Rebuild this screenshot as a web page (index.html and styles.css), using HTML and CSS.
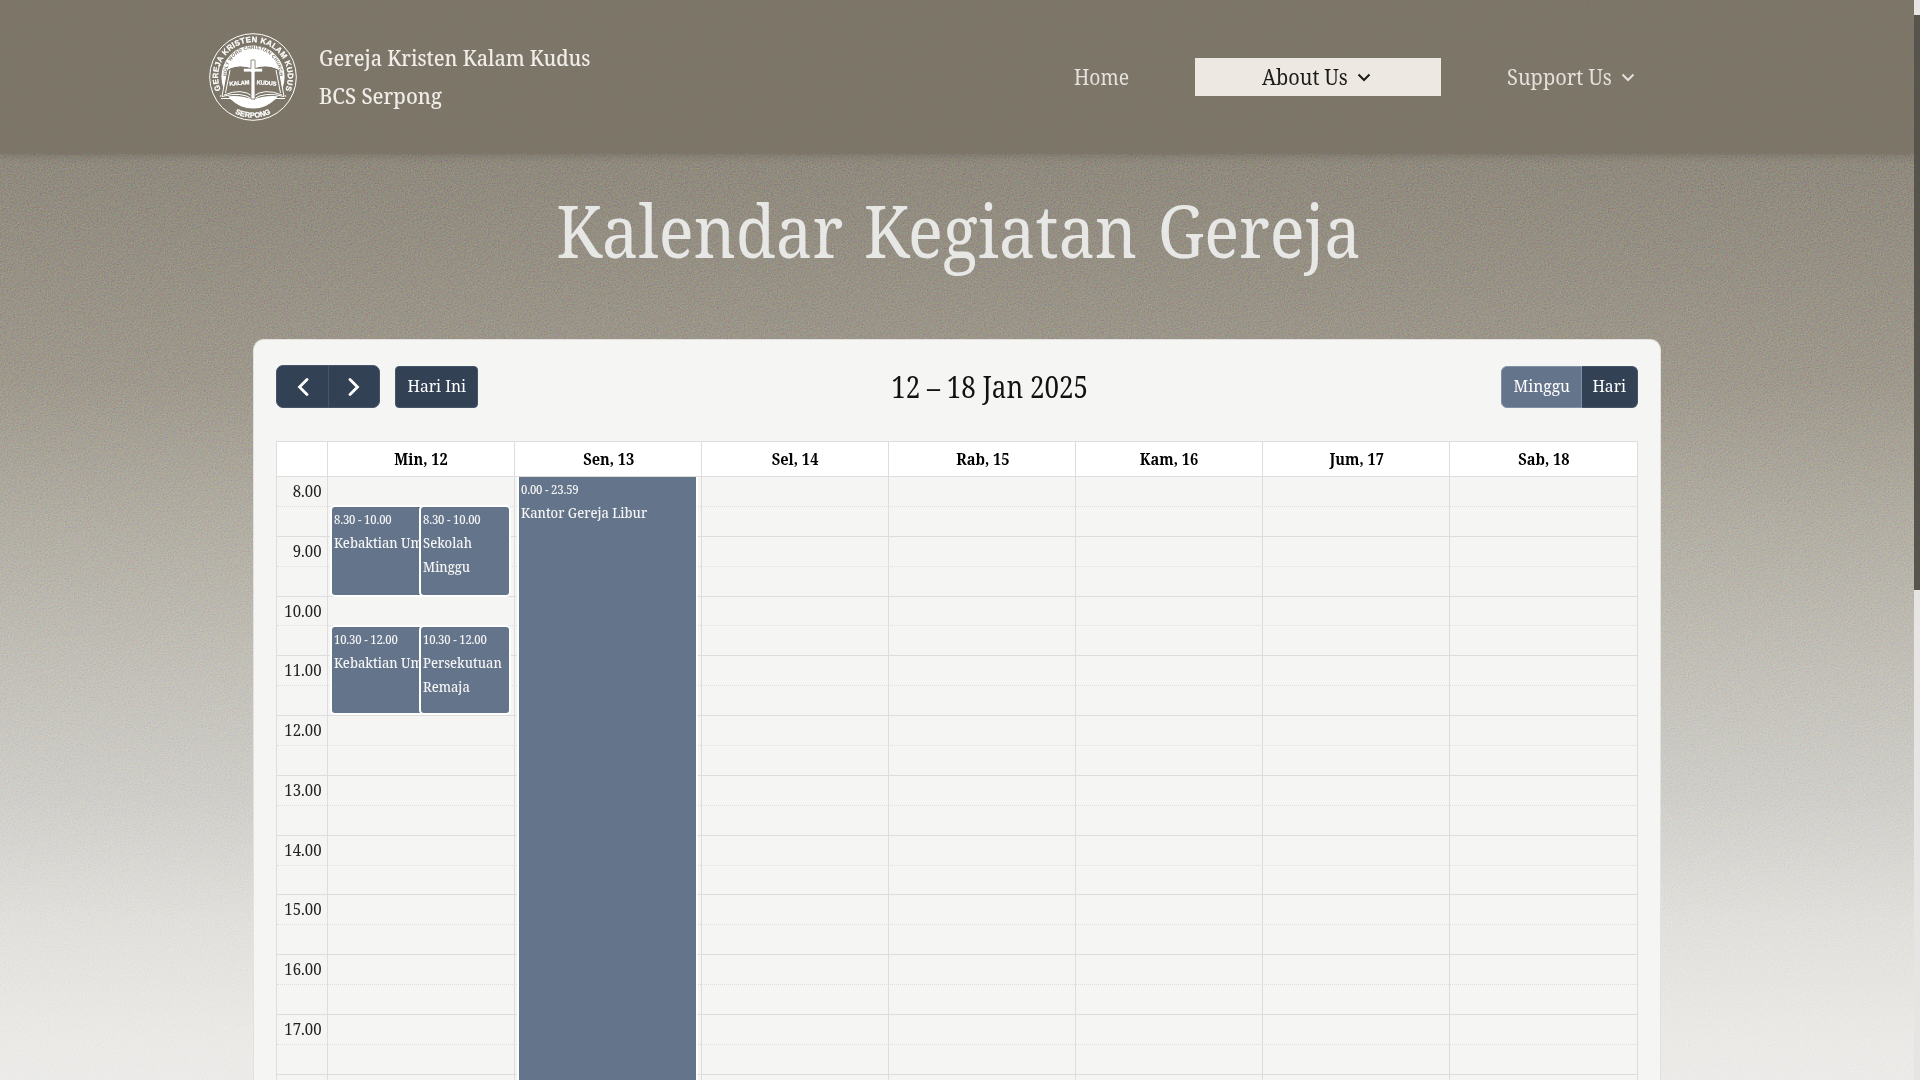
FILE: index.html
```
<!DOCTYPE html>
<html lang="id">
<head>
<meta charset="utf-8">
<title>Kalendar Kegiatan Gereja</title>
<link rel="stylesheet" href="styles.css">
</head>
<body>
<svg class="grain" aria-hidden="true">
  <filter id="grain" x="0" y="0" width="100%" height="100%" color-interpolation-filters="sRGB">
    <feTurbulence type="fractalNoise" baseFrequency="0.7" numOctaves="2" stitchTiles="stitch"/>
    <feColorMatrix type="matrix" values="1 0 0 0 0  0 1 0 0 0  0 0 1 0 0  0 0 0 0 1"/>
  </filter>
  <rect width="100%" height="100%" filter="url(#grain)"/>
</svg>
<div class="page">
  <header class="site-header">
    <a class="brand">
      <svg class="logo" viewBox="4 5 88 88">
        <defs>
          <path id="ring-top" d="M18.6 67.5 A34.8 34.8 0 1 1 77.4 67.5"/>
          <path id="ring-bottom" d="M20 78.4 A40.6 40.6 0 0 0 76 78.4"/>
          <path id="inner-top" d="M22.6 55 A26.500 26.500 0 1 1 73.4 55"/>
        </defs>
        <circle cx="48" cy="49" r="43.3" class="line" stroke-width="1"/>
        <circle cx="48" cy="49" r="31.6" class="fill"/>
        <path class="book" d="M22 42 Q34 35 48 41 Q62 35 74 42 L79 69 Q60 66 48 72 Q36 66 17 69 Z"/>
        <path class="line" stroke-width="1" d="M23.5 40.5 Q35 35 48 40 Q61 35 72.500 40.500 M22 41 L17 68.500 Q37 63 48 71.500 Q59 63 79 68.500 L74 41 M19 67 Q37 59.500 48 68.500 Q59 59.500 77 67 M16 70.500 H43 Q48 74 53 70.500 H80 M25 42 L20.500 65 M71 42 L75.500 65"/>
        <path class="cross" d="M46 32 h4 v8.300 h7.600 v3.700 H50 V71 H46 V44 H38.400 V40.300 H46 Z"/>
        <text class="seal-text" font-size="7.800"><textPath href="#ring-top" startOffset="50%" text-anchor="middle" textLength="136">GEREJA KRISTEN KALAM KUDUS</textPath></text>
        <text class="seal-text" font-size="7.400"><textPath href="#ring-bottom" startOffset="50%" text-anchor="middle">SERPONG</textPath></text>
        <text class="seal-inner" font-size="4.800"><textPath href="#inner-top" startOffset="50%" text-anchor="middle" textLength="84">HOLY WORD CHRISTIAN CHURCH</textPath></text>
        <text class="seal-text" font-size="5.800" x="24.500" y="57" textLength="20" transform="rotate(-4 34 56)">KALAM</text>
        <text class="seal-text" font-size="5.800" x="51.500" y="57" textLength="20" transform="rotate(4 62 56)">KUDUS</text>
        <circle cx="15.500" cy="68" r=".8" class="fill"/><circle cx="80.500" cy="68" r=".8" class="fill"/>
      </svg>
      <span class="brand-name"><span class="narrow">Gereja Kristen Kalam Kudus</span><span class="narrow">BCS Serpong</span></span>
    </a>
    <nav class="nav">
      <a class="nav-link home"><span class="narrow">Home</span></a>
      <a class="nav-link about active"><span class="narrow">About Us</span><svg class="chevron" viewBox="0 0 14 9"><path d="M1.500 1.500 L7 7 L12.500 1.500"/></svg></a>
      <a class="nav-link support"><span class="narrow">Support Us</span><svg class="chevron" viewBox="0 0 14 9"><path d="M1.500 1.500 L7 7 L12.500 1.500"/></svg></a>
    </nav>
  </header>
  <h1 class="page-title"><span class="narrow">Kalendar Kegiatan Gereja</span></h1>
  <main class="card">
    <div class="toolbar">
      <div class="toolbar-left">
        <div class="pager">
          <button class="btn"><svg viewBox="0 0 12 18"><path d="M10 1.500 L2.500 9 L10 16.500"/></svg></button>
          <button class="btn"><svg viewBox="0 0 12 18"><path d="M2 1.500 L9.500 9 L2 16.500"/></svg></button>
        </div>
        <button class="btn today"><span class="narrow">Hari Ini</span></button>
      </div>
      <h2 class="range"><span class="narrow">12 – 18 Jan 2025</span></h2>
      <div class="views">
        <button class="btn week"><span class="narrow">Minggu</span></button>
        <button class="btn day"><span class="narrow">Hari</span></button>
      </div>
    </div>
    <section class="calendar">
      <div class="head">
        <div></div>
        <div><span class="narrow">Min, 12</span></div>
        <div><span class="narrow">Sen, 13</span></div>
        <div><span class="narrow">Sel, 14</span></div>
        <div><span class="narrow">Rab, 15</span></div>
        <div><span class="narrow">Kam, 16</span></div>
        <div><span class="narrow">Jum, 17</span></div>
        <div><span class="narrow">Sab, 18</span></div>
      </div>
      <div class="body">
        <div class="slots">
          <div class="slot"><span class="narrow">8.00</span></div><div class="slot"></div>
          <div class="slot"><span class="narrow">9.00</span></div><div class="slot"></div>
          <div class="slot"><span class="narrow">10.00</span></div><div class="slot"></div>
          <div class="slot"><span class="narrow">11.00</span></div><div class="slot"></div>
          <div class="slot"><span class="narrow">12.00</span></div><div class="slot"></div>
          <div class="slot"><span class="narrow">13.00</span></div><div class="slot"></div>
          <div class="slot"><span class="narrow">14.00</span></div><div class="slot"></div>
          <div class="slot"><span class="narrow">15.00</span></div><div class="slot"></div>
          <div class="slot"><span class="narrow">16.00</span></div><div class="slot"></div>
          <div class="slot"><span class="narrow">17.00</span></div><div class="slot"></div>
          <div class="slot"></div>
        </div>
        <div class="columns">
          <div></div>
          <div>
            <article class="event early left"><span class="time narrow">8.30 - 10.00</span><span class="name narrow">Kebaktian Um</span></article>
            <article class="event early right"><span class="time narrow">8.30 - 10.00</span><span class="name narrow">Sekolah<br>Minggu</span></article>
            <article class="event late left"><span class="time narrow">10.30 - 12.00</span><span class="name narrow">Kebaktian Um</span></article>
            <article class="event late right"><span class="time narrow">10.30 - 12.00</span><span class="name narrow">Persekutuan<br>Remaja</span></article>
          </div>
          <div>
            <article class="event full"><span class="time narrow">0.00 - 23.59</span><span class="name narrow">Kantor Gereja Libur</span></article>
          </div>
          <div></div><div></div><div></div><div></div><div></div>
        </div>
      </div>
    </section>
  </main>
</div>
<div class="scrollbar"><div class="thumb"></div></div>
</body>
</html>
```
FILE: styles.css
```
* { box-sizing: border-box; }

body {
  margin: 0;
  height: 1080px;
  overflow: hidden;
  display: flex;
  position: relative;
  font-family: "Noto Serif", "DejaVu Serif Condensed", serif;
  background: linear-gradient(#8f897d 150px, #9f998d 380px, #b1ada2 512px, #c1beb6 650px, #d0cfca 800px, #e1e0dc 920px, #ebeae7 1040px, #ecebe9 1080px);
}

.grain {
  position: absolute;
  inset: 0;
  width: 100%;
  height: 100%;
  mix-blend-mode: soft-light;
  opacity: .6;
}

/* The typeface is set slightly condensed everywhere */
.narrow {
  display: inline-block;
  white-space: nowrap;
  transform: scaleX(var(--squeeze, .9));
  transform-origin: var(--origin, center);
}

.page { flex: 1; height: 1080px; overflow: hidden; position: relative; display: flex; flex-direction: column; }

.site-header {
  flex: none;
  height: 154px;
  padding-left: 209px;
  display: flex;
  align-items: center;
  background: rgba(122, 115, 101, .87);
  box-shadow: 0 3px 6px rgba(90, 84, 72, .3);
  color: #f0ede9;
  font-size: 22px;
}
.brand { display: flex; align-items: center; gap: 22px; width: 785px; }
.logo { width: 88px; height: 88px; }
.logo .line { fill: none; stroke: #fff; }
.logo .fill { fill: #fff; }
.logo .book { fill: #7c7568; }
.logo .cross { fill: #fff; stroke: #7c7568; stroke-width: .8; }
.seal-text, .seal-inner { font-family: "Liberation Sans", sans-serif; font-weight: 700; fill: #fff; }
.seal-text { stroke: #fff; stroke-width: .25; }
.seal-inner { fill: #7c7568; }
.brand-name { display: flex; flex-direction: column; padding-bottom: 2px; line-height: 38px; font-weight: 500; --origin: left; --squeeze: .9; }
.brand-name .narrow:last-child { --squeeze: .917; }

.nav { display: flex; align-items: center; }
.nav-link { display: flex; align-items: center; height: 38px; line-height: 36px; --origin: left; color: #e4e0db; }
.nav-link .narrow { height: 38px; }
.home { width: 201px; padding-left: 80px; --squeeze: .88; }
.about { width: 246px; padding-left: 67px; --squeeze: .905; }
.support { padding-left: 66px; --squeeze: .91; }
.support .chevron { margin-left: -1px; }
.active { background: #ede9e2; color: #1c1b19; }
.chevron { width: 14px; height: 9px; fill: none; stroke: currentColor; stroke-width: 2; }

.page-title {
  margin: 20px 0 0;
  padding-left: 4px;
  height: 165px;
  flex: none;
  text-align: center;
  font-size: 73px;
  font-weight: 400;
  line-height: 112px;
  word-spacing: 4px;
  color: #e7e7e6;
  --squeeze: .893;
}

.card {
  width: 1408px;
  margin-left: 253px;
  flex: 1;
  padding: 25px 22px 0;
  border: 1px solid #e2e1de;
  border-bottom: 0;
  border-radius: 11px 11px 0 0;
  background: #f5f5f3;
}
.toolbar { display: flex; align-items: center; justify-content: space-between; height: 43px; margin-bottom: 33px; }
.toolbar-left { display: flex; align-items: flex-end; gap: 15px; }
.pager, .views { display: flex; }
.btn {
  height: 42px;
  padding: 0;
  display: flex;
  align-items: center;
  justify-content: center;
  border: 1px solid #475569;
  background: #334155;
  color: #fff;
  font: 17px "Noto Serif", "DejaVu Serif Condensed", serif;
  line-height: 24px;
  padding-bottom: 2px;
  --squeeze: .92;
}
.pager .btn { width: 52px; height: 43px; padding-bottom: 0; }
.pager .btn:first-child { width: 53px; border-radius: 7px 0 0 7px; }
.pager .btn:last-child { margin-left: -1px; border-radius: 0 7px 7px 0; }
.pager svg { width: 12px; height: 18px; fill: none; stroke: #fff; stroke-width: 2.8; stroke-linecap: round; }
.today { width: 83px; border-radius: 4px; }
.views { align-self: flex-end; }
.views .week { width: 81px; border-color: #8190a5; background: #64748b; border-radius: 6px 0 0 6px; }
.views .day { width: 56px; border-left: 0; border-radius: 0 6px 6px 0; }
.range { margin: 0; width: 240px; text-align: center; font-size: 30px; font-weight: 400; line-height: 42px; color: #111; --squeeze: .865; }

.calendar { border: 1px solid #ddd; border-bottom: 0; }
.head, .columns { display: grid; grid-template-columns: 51px repeat(7, minmax(0, 1fr)); }
.head { height: 35px; background: #fff; border-bottom: 1px solid #ddd; font-size: 17px; font-weight: 700; line-height: 34px; text-align: center; --squeeze: .86; }
.head > div, .columns > div { border-right: 1px solid #ddd; position: relative; }
.head > div { padding-left: 1px; }
.head > div:last-child, .columns > div:last-child { border-right: 0; }

.body { display: grid; height: 628px; overflow: hidden; }
.slots, .columns { grid-area: 1 / 1; }
.slot { height: 29.9px; border-bottom: 1px dotted #ddd; }
.slot:nth-child(even) { border-bottom-style: solid; }
.slot .narrow { width: 44.5px; text-align: right; font-size: 17px; line-height: 27px; color: #222; --origin: right; --squeeze: .88; }

.event {
  position: absolute;
  display: flex;
  flex-direction: column;
  padding: 0 1.5px;
  overflow: hidden;
  border-radius: 3px;
  background: #64748b;
  box-shadow: 0 0 0 2px #fff;
  color: #f5f5f5;
  font-weight: 500;
  --origin: left;
  --squeeze: .92;
}
.time { font-size: 12.3px; line-height: 24px; letter-spacing: -.2px; position: relative; top: .5px; }
.name { font-size: 14px; line-height: 24px; }
.early { top: 30px; height: 88px; }
.late { top: 150px; height: 86px; }
.left { left: 4px; width: 88px; border-radius: 3px 0 0 3px; }
.right { left: 93px; width: 88px; }
.full { top: 0; left: 4px; width: 177px; height: 640px; border-radius: 0; }

.scrollbar { width: 6px; height: 1080px; padding-top: 15px; background: #e6e5e3; position: relative; }
.thumb { height: 575px; background: #57534d; }
```
